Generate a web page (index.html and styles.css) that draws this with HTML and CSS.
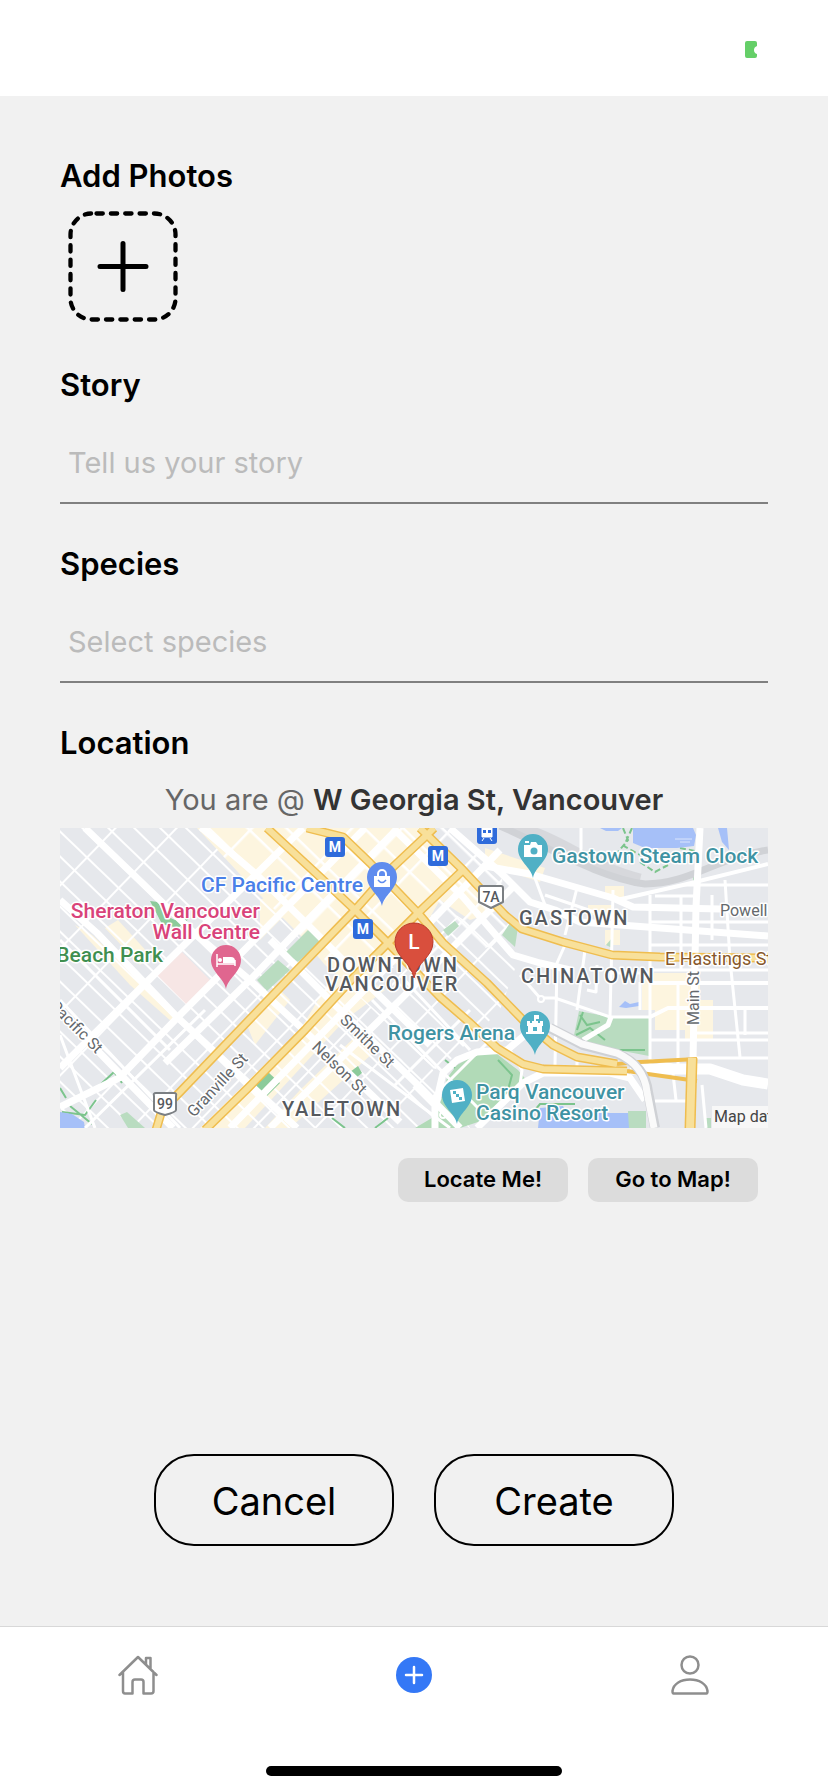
FILE: index.html
```html
<!DOCTYPE html>
<html lang="en">
<head>
<meta charset="utf-8">
<meta name="viewport" content="width=device-width, initial-scale=1">
<title>Create post</title>
<link rel="stylesheet" href="styles.css">
</head>
<body>
<div class="app">
  <header class="status">
    <svg class="battery" viewBox="0 0 12 17" aria-hidden="true"><path d="M2 0H10Q12 0 12 2V5Q9 6 9 9T12 13V15Q12 17 10 17H2Q0 17 0 15V2Q0 0 2 0Z" fill="#65cf68"/></svg>
  </header>

  <main class="form">
    <h2 class="label">Add Photos</h2>
    <button class="photo" type="button" aria-label="Add a photo">
      <svg viewBox="0 0 114 114" aria-hidden="true">
        <rect x="4.500" y="5.500" width="105" height="106" rx="21" fill="none" stroke="#000" stroke-width="4.300" stroke-linecap="round" stroke-dasharray="6.300 8.060" stroke-dashoffset="-5"/>
        <path d="M57 35.500V81.500M34 58.500H80" stroke="#000" stroke-width="5" stroke-linecap="round"/>
      </svg>
    </button>

    <div class="field field-first">
      <label class="label" for="story">Story</label>
      <input class="input" id="story" type="text" placeholder="Tell us your story">
    </div>
    <div class="field">
      <label class="label" for="species">Species</label>
      <input class="input" id="species" type="text" placeholder="Select species">
    </div>

    <section class="field">
      <h2 class="label">Location</h2>
      <p class="place">You are @ <strong>W Georgia St, Vancouver</strong></p>
      <svg class="map" viewBox="60 828 708 300" role="img" aria-label="Map of downtown Vancouver">
        <defs>
          <pattern id="blocks" width="44" height="18" patternUnits="userSpaceOnUse" patternTransform="translate(62 882) rotate(44)">
            <path d="M0 0H44M0 0V18" stroke="#fff" stroke-width="4" fill="none"/>
          </pattern>
          <pattern id="core" width="36" height="27" patternUnits="userSpaceOnUse" patternTransform="translate(257 873) rotate(44)">
            <path d="M0 0H36M0 0V27" stroke="#fff" stroke-width="5" fill="none"/>
          </pattern>
          <path id="pin" d="M0 29C-2 18-15 12-15 0A15 15 0 0 1 15 0C15 12 2 18 0 29Z"/>
          <rect id="metro" x="-10" y="-10" width="20" height="20" rx="3" fill="#2f6bdb"/>
        </defs>
        <rect x="60" y="828" width="708" height="300" fill="#e6e8ec"/>

        <g fill="#fdf5df">
          <path d="M197 828H420L500 910L470 920L440 900L405 960L350 985L325 965L300 935L250 885Z"/>
          <path d="M75 925L92 935L180 1015L172 1022L130 985Z"/>
          <path d="M105 928L118 920L150 955L140 965Z"/>
          <path d="M260 900L280 890L295 905L260 940Z"/>
          <path d="M330 980L360 975L385 990L345 1020L245 1128H200L300 1030Z"/>
          <path d="M245 1020L280 990L290 1000L255 1045Z"/>
          <path d="M300 1090L362 1030L382 1045L290 1128H265Z"/>
          <path d="M485 848L545 868L540 882L510 872L485 866Z"/>
          <path d="M605 886H624V900L605 898ZM588 905H612V915H588ZM605 930H620V945H605Z"/>
          <path d="M642 973H700V1000H713V1040H685V1030H655V1010H642Z"/>
        </g>

        <path d="M60 828H198L250 885L325 965L420 1050L470 1128H60Z" fill="url(#blocks)"/>
        <path d="M390 965L440 905L520 955L500 1010L440 1070L400 1060Z" fill="url(#blocks)"/>
        <path d="M197 828H450L500 870L515 940L440 960L400 965L350 985L300 935L250 885Z" fill="url(#core)"/>
        <path d="M182 952L210 980L187 1005L157 975Z" fill="#f7e6e5"/>

        <g fill="#b9dcc0">
          <path d="M285 953L308 930L322 940L298 962Z"/>
          <path d="M257 980L278 960L290 970L267 991Z"/>
          <path d="M120 1115L127 1112L145 1128H128Z"/>
          <path d="M510 923L518 927L515 947L502 935Z"/>
          <path d="M443 930L455 921L459 926L448 936Z"/>
          <path d="M579 1011L610 1017H649V1056L607 1048L573 1040Z"/>
          <path d="M60 1112L85 1128H60Z"/>
          <path d="M693 877L700 873V885H693Z"/>
          <path d="M628 1111H646V1128H628Z"/>
          <path d="M706 1118H711V1128H706Z"/>
          <path d="M322 828L330 830V840Z"/>
          <path d="M606 945L612 938V948Z"/>
        </g>
        <g fill="#8ccb9b">
          <path d="M150 901L158 902L164 915L175 920L190 918L178 928L162 924Z"/>
          <path d="M268 1072L280 1083L265 1098L253 1087Z"/>
          <path d="M350 1072L358 1066L362 1073L356 1078Z"/>
        </g>
        <path d="M447 1078L457 1065L477 1054H497L518 1070L528 1082L490 1118L460 1128H415L437 1115Z" fill="#b1dab7"/>
        <g fill="none" stroke="#7cc48d" stroke-width="2">
          <path d="M60 1065L68 1060M60 1088L66 1098M100 1085L114 1072L122 1083M62 1112L85 1115L96 1100M70 1106L92 1124M332 1118L345 1128M375 1128L388 1118"/>
          <path d="M580 1015L587 1025L600 1022M576 1035L590 1028L605 1040M583 1012L577 1030M645 1050H610M498 1060L512 1075L508 1090M445 1060L455 1068M535 1110L540 1104H575"/>
          <path d="M623 828L628 840L618 852M632 828L624 846L640 855M640 862L655 872L668 865M680 848L700 852" stroke-dasharray="6 3"/>
        </g>
        <g fill="#a6c0f8">
          <path d="M633 828H693L696 835L694 846L677 848H645L633 843Z"/>
          <path d="M718 828H727L729 850L722 842Z"/>
          <path d="M600 828H622L618 831H606Z"/>
          <path d="M540 1108L563 1106L567 1113H628L629 1128H538Z"/>
          <path d="M60 1112L72 1114L84 1122L85 1128H60Z"/>
          <path d="M619 1007L625 1001L630 1004L639 1002V1006L626 1008Z"/>
        </g>
        <path d="M675 839H692M680 842H690" stroke="#dbe5fb" stroke-width="1"/>

        <g fill="none" stroke="#d0d2d6" stroke-linejoin="round">
          <path d="M500 826C550 848 600 878 645 884C690 884 715 858 768 850" stroke-width="7"/>
          <path d="M510 826C560 838 590 868 640 880" stroke-width="13" opacity="0.700"/>
        </g>

        <g fill="none" stroke="#fff" stroke-linejoin="round" stroke-width="3">
          <path d="M683 885H768M650 945H768M650 970H768M650 922H768M655 896H695M650 1040H768M690 1033H768M690 1058H768M612 973H650M555 998L610 1017H650"/>
          <path d="M581 828V860M577 888L565 935M532 870L545 905M613 890L612 937L610 1017M650 895V1065M650 1060L672 1065L676 1100M655 1101H690M681 895V970M678 983V1070M725 880L730 960L740 1057M712 895V940M545 895L612 918"/>
          <path d="M565 945L557 963L555 1065M585 950L577 1010M597 965L596 992L587 990M520 975L540 998H555M577 1055V1070M640 982V1010M702 1085L706 1128M745 1035V1010"/>
          <path d="M372 1000L480 1110M340 1045L450 1128M400 975L470 1050M430 1100L500 1030M395 1085L470 1010M510 1050L522 1070L520 1085"/>
          <path d="M60 1035L95 1128M60 1000L180 1128M60 940L170 1050M85 1128L205 1010"/>
        </g>
        <circle cx="541" cy="999" r="3" fill="#e6e8ec" stroke="#fff" stroke-width="2"/>
        <circle cx="443" cy="1115" r="3" fill="none" stroke="#fff" stroke-width="2"/>

        <g fill="none" stroke="#fff" stroke-linejoin="round" stroke-width="7">
          <path d="M60 1068L90 1038L180 949L303 828"/>
          <path d="M120 1077L177 1018L280 914L365 828"/>
          <path d="M165 1063L252 978L300 928L398 828"/>
          <path d="M230 1128L340 1015L440 912L500 850"/>
          <path d="M270 1128L400 1000L513 887"/>
          <path d="M60 1012L123 1077L173 1128"/>
          <path d="M60 900L97 933L177 1017L297 1128"/>
          <path d="M85 828L193 932L252 982L307 1033L400 1122"/>
          <path d="M202 828L257 875L303 920L353 970L430 1045"/>
          <path d="M270 940L337 1007L420 1087L460 1128"/>
          <path d="M60 1107L123 1076"/>
          <path d="M393 828L463 897L513 955L540 963L570 970"/>
          <path d="M450 828L500 872L530 902L555 910L580 922L768 936"/>
          <path d="M485 866L530 874L613 898L633 907L768 910"/>
          <path d="M617 900L683 885L768 864" stroke-width="4"/>
          <path d="M650 1017L668 1008H768M650 983H768" stroke-width="4"/>
          <path d="M700 828L696 907L695 960L693 1060"/>
          <path d="M583 1040L608 1025L611 1017" stroke-width="5"/>
          <path d="M415 1085L435 1105V1128M435 1108L443 1073L457 1060L477 1052L507 1050L537 1025"/>
          <path d="M477 1128L523 1083L543 1073H610L630 1078L645 1100"/>
          <path d="M630 1069H710L743 1080L768 1084" stroke-width="11"/>
        </g>

        <g fill="none" stroke-linejoin="round">
          <g stroke="#efbd4f" stroke-width="9">
            <path d="M156 1130L162 1110L180 1092L297 970L355 910L393 867L427 835L434 828M205 1130L248 1088L305 1030L353 978L388 943L418 913L463 870M420 828L463 870L505 915L522 929L563 942L612 955L660 957L768 958M307 828L343 837L370 863L418 913L443 943L487 983L523 1020L553 1045L577 1057L617 1064M267 828L320 877L355 910L388 943L440 997L470 1023L497 1048L523 1064L543 1069L627 1071"/>
            <path d="M690 1130L692 1058" stroke-width="11"/>
          </g>
          <path d="M617 1064L640 1062L697 1059M627 1071L697 1081" stroke="#efbd4f" stroke-width="4"/>
          <g stroke="#f8e09a" stroke-width="6">
            <path d="M156 1130L162 1110L180 1092L297 970L355 910L393 867L427 835L434 828M205 1130L248 1088L305 1030L353 978L388 943L418 913L463 870M420 828L463 870L505 915L522 929L563 942L612 955L660 957L768 958M307 828L343 837L370 863L418 913L443 943L487 983L523 1020L553 1045L577 1057L617 1064M267 828L320 877L355 910L388 943L440 997L470 1023L497 1048L523 1064L543 1069L627 1071"/>
            <path d="M690 1130L692 1058" stroke-width="8"/>
          </g>
        </g>
        <path d="M550 1028L583 1045L618 1054Q645 1066 648 1092L655 1128" fill="none" stroke="#cfd1d5" stroke-width="10"/>
        <path d="M549 1027L582 1044L617 1053Q644 1065 647 1092L654 1128" fill="none" stroke="#fafafa" stroke-width="7"/>

        <use href="#metro" x="335" y="847"/><use href="#metro" x="438" y="856"/><use href="#metro" x="363" y="929"/><use href="#metro" x="487" y="834"/>
        <g class="map-metro"><text x="335" y="852">M</text><text x="438" y="861">M</text><text x="363" y="934">M</text></g>
        <path d="M482 828H492V837H482ZM484 838L482 841M490 838L492 841" fill="#fff" stroke="#fff" stroke-width="1"/>
        <path d="M483 830H486V833H483ZM488 830H491V833H488Z" fill="#2f6bdb"/>

        <g fill="#fff" stroke="#7b7f83" stroke-width="2" stroke-linejoin="round">
          <path d="M481 886H501Q503 886 503 888V902L491 908L479 902V888Q479 886 481 886Z"/>
          <path d="M156 1093H174Q177 1093 176 1096V1110Q176 1112 165 1115Q154 1112 154 1110V1096Q153 1093 156 1093Z"/>
        </g>
        <g class="map-shield"><text x="491" y="902">7A</text><text x="165" y="1109">99</text></g>

        <use href="#pin" x="382" y="877" fill="#5f8cee"/>
        <path d="M374 876H390V887H374Z" fill="#fff"/><path d="M378 877V874A4 4 0 0 1 386 874V877" fill="none" stroke="#fff" stroke-width="2"/><path d="M378 880Q382 885 386 880" fill="none" stroke="#5f8cee" stroke-width="1.500"/>
        <use href="#pin" x="226" y="960" fill="#e0668f"/>
        <path d="M217 954V967M217 964H235M235 966V960" stroke="#fff" stroke-width="1.500" fill="none"/><path d="M223 957H231Q235 957 235 961V963H223Z" fill="#fff"/><circle cx="220" cy="960" r="2" fill="#fff"/>
        <use href="#pin" x="533" y="849" fill="#50b0c5"/>
        <path d="M524 845H530L531 842H536L538 845H542V857H524Z" fill="#fff"/><circle cx="534" cy="851" r="3.500" fill="#50b0c5"/><path d="M525 842H529" stroke="#fff" stroke-width="2"/>
        <use href="#pin" x="535" y="1026" fill="#50b0c5"/>
        <path d="M526 1034V1032H528V1026H527V1021H530V1023H532V1021H534V1015H539V1019H536V1021H538V1023H540V1021H543V1026H542V1032H544V1034Z" fill="#fff"/><path d="M533 1027H537V1031H533Z" fill="#50b0c5"/>
        <use href="#pin" x="457" y="1095" fill="#50b0c5"/>
        <path d="M450 1090L463 1088L465 1101L452 1103Z" fill="#fff"/><path d="M453 1091h3v3h-3zM456 1094h3v3h-3zM459 1097h3v3h-3z" fill="#50b0c5"/>

        <g class="map-poi">
          <text class="c-shop end" x="363" y="892">CF Pacific Centre</text>
          <text class="c-hotel end" x="260" y="918">Sheraton Vancouver</text>
          <text class="c-hotel end" x="260" y="939">Wall Centre</text>
          <text class="c-park end" x="163" y="962">Beach Park</text>
          <text class="c-sight" x="552" y="863">Gastown Steam Clock</text>
          <text class="c-sight end" x="515" y="1040">Rogers Arena</text>
          <text class="c-sight" x="476" y="1099">Parq Vancouver</text>
          <text class="c-sight" x="476" y="1120">Casino Resort</text>
        </g>
        <g class="map-area">
          <text x="519" y="925">GASTOWN</text>
          <text x="521" y="983">CHINATOWN</text>
          <text x="327" y="972">DOWNTOWN</text>
          <text x="325" y="991">VANCOUVER</text>
          <text x="282" y="1116">YALETOWN</text>
        </g>
        <g class="map-street">
          <text x="720" y="916">Powell</text>
          <text class="c-road" x="665" y="965">E Hastings St</text>
          <text transform="translate(699 1025) rotate(-90)">Main St</text>
          <text transform="translate(49 1007) rotate(45)">Pacific St</text>
          <text transform="translate(194 1118) rotate(-47)">Granville St</text>
          <text transform="translate(311 1048) rotate(44)">Nelson St</text>
          <text transform="translate(339 1021) rotate(44)">Smithe St</text>
        </g>
        <path d="M414 978C411 962 395 957 395 942A19 19 0 0 1 433 942C433 957 417 962 414 978Z" fill="#d94f3d" stroke="#b93a2c" stroke-width="1"/>
        <text class="map-marker" x="414" y="949">L</text>
        <rect x="712" y="1106" width="56" height="22" fill="#f7f7f7"/>
        <text class="map-credit" x="714" y="1122">Map data</text>
      </svg>
      <div class="tools">
        <button class="tool" type="button">Locate Me!</button>
        <button class="tool" type="button">Go to Map!</button>
      </div>
    </section>

    <div class="actions">
      <button class="action" type="button">Cancel</button>
      <button class="action" type="submit">Create</button>
    </div>
  </main>

  <footer class="footer">
    <nav class="tabs">
      <a class="tab" href="#home" aria-label="Home">
        <svg viewBox="0 0 40 40" fill="none" stroke="#8e8e8e" stroke-width="2.500" stroke-linejoin="round" stroke-linecap="round" aria-hidden="true">
          <path d="M1.500 20L20 2L38.500 20M5 17V36Q5 38.500 7 38.500H14.500V27Q14.500 24.500 17 24.500H23Q25.500 24.500 25.500 27V38.500H33Q35.500 38.500 35.500 36V17M28 9V3H32.500V13"/>
        </svg>
      </a>
      <a class="tab" href="#create" aria-label="Create">
        <svg viewBox="0 0 40 40" aria-hidden="true"><circle cx="20" cy="20" r="18" fill="#3478f6"/><path d="M20 12V28M12 20H28" stroke="#fff" stroke-width="2.500" stroke-linecap="round"/></svg>
      </a>
      <a class="tab" href="#profile" aria-label="Profile">
        <svg viewBox="0 0 40 40" fill="none" stroke="#8e8e8e" stroke-width="2.500" stroke-linejoin="round" aria-hidden="true">
          <circle cx="20" cy="10" r="8.500"/><path d="M3.500 38.500Q2.500 38.500 2.500 36C3.500 28.500 11 24.500 20 24.500S36.500 28.500 37.500 36Q37.500 38.500 36.500 38.500Z"/>
        </svg>
      </a>
    </nav>
    <div class="home-bar"></div>
  </footer>
</div>
</body>
</html>
```
FILE: styles.css
```css
* {
  box-sizing: border-box;
}

body {
  margin: 0;
  background: #f1f1f1;
  color: #000;
  font-family: Inter, "Liberation Sans", sans-serif;
}

button {
  font: inherit;
  color: inherit;
  cursor: pointer;
}

.app {
  display: flex;
  flex-direction: column;
  min-height: 100vh;
}

.status {
  display: flex;
  justify-content: flex-end;
  align-items: flex-start;
  height: 96px;
  padding: 41px 71px 0;
  background: #fff;
}

.battery {
  width: 12px;
  height: 17px;
}

.form {
  flex: 1;
  display: flex;
  flex-direction: column;
  padding: 60px 60px 80px;
}

.label {
  display: block;
  margin: 0;
  font-size: 31px;
  line-height: 40px;
  font-weight: 600;
}

.photo {
  align-self: flex-start;
  margin: 12px 0 0 6px;
  padding: 0;
  border: 0;
  background: none;
}

.photo svg {
  display: block;
  width: 114px;
}

.field {
  margin-top: 40px;
}

.field-first {
  margin-top: 43px;
}

.input {
  display: block;
  width: 100%;
  height: 99px;
  padding: 18px 8px 0;
  border: 0;
  border-bottom: 2px solid #808080;
  border-radius: 0;
  outline: 0;
  background: none;
  font: inherit;
  font-size: 29px;
}

.input::placeholder {
  color: #bbb;
  opacity: 1;
}

.place {
  margin: 17px 0 8px;
  color: #666;
  font-size: 29px;
  line-height: 40px;
  text-align: center;
}

.place strong {
  color: #333;
  font-weight: 600;
}

.map {
  display: block;
  width: 100%;
  overflow: hidden;
  font-family: Roboto, "Liberation Sans", sans-serif;
}

.map text {
  paint-order: stroke;
  stroke: #fff;
  stroke-width: 3px;
  stroke-linejoin: round;
}

.map .end {
  text-anchor: end;
}

.map-poi {
  font-size: 21px;
  font-weight: 500;
}

.map-area {
  fill: #55595e;
  font-size: 20px;
  font-weight: 500;
  letter-spacing: 2px;
}

.map-street {
  fill: #65696d;
  font-size: 16px;
}

.map .c-shop { fill: #4a80e8; }
.map .c-hotel { fill: #d9437a; }
.map .c-park { fill: #3f8f50; }
.map .c-sight { fill: #3f93a3; }
.map .c-road { fill: #87582a; font-size: 18px; }

.map .map-metro text,
.map .map-shield text,
.map .map-marker,
.map .map-credit {
  stroke: none;
}

.map-metro {
  fill: #fff;
  font-size: 14px;
  font-weight: 700;
  text-anchor: middle;
}

.map-shield {
  fill: #55595e;
  font-size: 14px;
  font-weight: 500;
  text-anchor: middle;
}

.map-marker {
  fill: #fff;
  font-size: 21px;
  font-weight: 500;
  text-anchor: middle;
}

.map-credit {
  fill: #444;
  font-size: 16px;
}

.tools {
  display: flex;
  justify-content: flex-end;
  gap: 20px;
  margin: 30px 10px 0;
}

.tool {
  width: 170px;
  height: 44px;
  padding: 0 0 2px;
  border: 0;
  border-radius: 10px;
  background: #dcdcdc;
  font-size: 22px;
  font-weight: 600;
}

.actions {
  display: flex;
  justify-content: center;
  gap: 40px;
  margin-top: auto;
}

.action {
  width: 240px;
  height: 92px;
  padding: 2px 0 0;
  border: 2px solid #000;
  border-radius: 40px;
  background: none;
  font-size: 38px;
}

.footer {
  display: flex;
  flex-direction: column;
  justify-content: space-between;
  align-items: center;
  height: 166px;
  padding: 28px 0 16px;
  border-top: 1px solid #d8d8d8;
  background: #fff;
}

.tabs {
  display: flex;
  width: 100%;
}

.tab {
  flex: 1;
  display: flex;
  justify-content: center;
}

.tab svg {
  width: 40px;
  height: 40px;
}

.home-bar {
  width: 296px;
  height: 10px;
  border-radius: 5px;
  background: #000;
}
```
